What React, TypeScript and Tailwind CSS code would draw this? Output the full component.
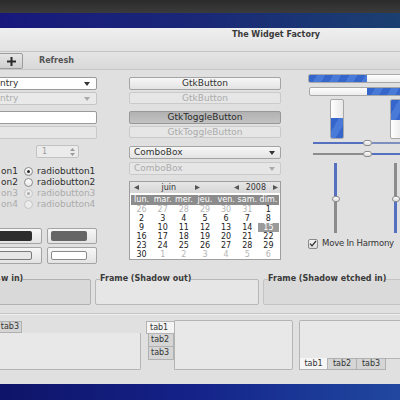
import React from 'react';

const DownArrow = ({ color = '#333' }: { color?: string }) => (
  <svg width="6" height="4" viewBox="0 0 6 4" className="shrink-0">
    <path d="M0 0h6L3 4z" fill={color} />
  </svg>
);

const SideArrow = ({ dir }: { dir: 'l' | 'r' }) => (
  <svg width="5" height="5" viewBox="0 0 5 5" className="shrink-0">
    <path d={dir === 'l' ? 'M5 0v5L0 2.5z' : 'M0 0v5l5-2.5z'} fill="#555" />
  </svg>
);

const btn =
  'flex items-center justify-center rounded-[2px] border border-[#a4a4a4] bg-gradient-to-b from-[#f7f7f7] to-[#e3e3e3]';
const btnOff =
  'flex items-center justify-center rounded-[2px] border border-[#cacaca] bg-[#e6e6e6] text-[#ababab]';

const calendar = [
  [26, 27, 28, 29, 30, 31, 1],
  [2, 3, 4, 5, 6, 7, 8],
  [9, 10, 11, 12, 13, 14, 15],
  [16, 17, 18, 19, 20, 21, 22],
  [23, 24, 25, 26, 27, 28, 29],
  [30, 1, 2, 3, 4, 5, 6],
];

const blueFill =
  'bg-[repeating-linear-gradient(120deg,#3566cc_0px,#3566cc_7px,#4a7ad8_7px,#4a7ad8_14px)]';

function App() {
  return (
    <div className="w-[400px] h-[400px] overflow-hidden flex flex-col font-['DejaVu_Sans',sans-serif] text-[9px] leading-none text-[#333]">
      {/* ── Desktop panel + wallpaper ─────────────────────────── */}
      <div className="h-[13px] shrink-0 bg-gradient-to-b from-[#2b2b2b] to-[#3b3b3b]" />
      <div className="h-[15px] shrink-0 bg-gradient-to-r from-[#18187c] via-[#1a2877] to-[#1b3f70]" />

      {/* ── Window ───────────────────────────────────────────── */}
      <div className="h-[356px] shrink-0 bg-[#e0e0e0] flex flex-col">
        {/* title bar */}
        <div className="h-[24px] shrink-0 border-b border-[#c4c4c4] bg-gradient-to-b from-[#efefef] to-[#e2e2e2] pt-[1px] pl-[232px]">
          <span className="text-[8px] leading-[11px] font-bold text-[#3a3a3a] whitespace-nowrap">The Widget Factory</span>
        </div>

        {/* toolbar */}
        <div className="h-[18px] shrink-0 border-b border-[#c6c6c6] bg-gradient-to-b from-[#e4e4e4] to-[#d9d9d9] flex items-start">
          <div className="mt-[1px] -ml-[5px] w-[28px] h-[16px] rounded-[2px] border border-[#9c9c9c] bg-gradient-to-b from-[#e6e6e6] to-[#cfcfcf] flex items-center justify-center pl-[5px]">
            <svg width="9" height="9" viewBox="0 0 9 9">
              <path d="M3.5 0h2v3.5H9v2H5.5V9h-2V5.5H0v-2h3.5z" fill="#2a2a2a" />
            </svg>
          </div>
          <span className="ml-[16px] mt-[5px] text-[8px] font-bold text-[#555]">Refresh</span>
        </div>

        {/* widgets */}
        <div className="flex items-start pt-[4px]">
          {/* left column */}
          <div className="-ml-[40px] w-[137px] shrink-0 mt-[3px] flex flex-col">
            <div className="h-[13px] rounded-[2px] border border-[#9a9a9a] bg-white flex items-center pl-[39px] pr-[6px]">
              <span className="flex-1">ntry</span>
              <DownArrow />
            </div>
            <div className="mt-[2px] h-[13px] rounded-[2px] border border-[#c6c6c6] bg-[#e9e9e9] text-[#ababab] flex items-center pl-[39px] pr-[6px]">
              <span className="flex-1">ntry</span>
              <DownArrow color="#aaa" />
            </div>
            <div className="mt-[6px] h-[13px] rounded-[2px] border border-[#9a9a9a] bg-white" />
            <div className="mt-[2px] h-[13px] rounded-[2px] border border-[#c8c8c8] bg-[#e6e6e6]" />
            <div className="mt-[6px] ml-[76px] w-[43px] h-[13px] rounded-[2px] border border-[#c2c2c2] bg-[#ebebeb] flex items-center pl-[5px] pr-[3px] text-[8px] text-[#9a9a9a]">
              <span className="flex-1">1</span>
              <svg width="5" height="8" viewBox="0 0 5 8">
                <path d="M0 3h5L2.5 0z M0 5h5L2.5 8z" fill="#9a9a9a" />
              </svg>
            </div>

            <div className="mt-[8px] flex flex-col">
              {[1, 2, 3, 4].map((n) => {
                const off = n > 2;
                const on = n === 1 || n === 3;
                return (
                  <div key={n} className={`h-[11px] flex items-center ${off ? 'text-[#ababab]' : 'text-[#2e2e2e]'}`}>
                    <div className="w-[58px] flex justify-end whitespace-nowrap">{`on${n}`}</div>
                    <div
                      className={`ml-[6px] w-[9px] h-[9px] rounded-full border flex items-center justify-center ${
                        off ? 'border-[#c4c4c4] bg-[#ececec]' : 'border-[#8a8a8a] bg-gradient-to-b from-white to-[#e6e6e6]'
                      }`}
                    >
                      {on && <div className={`w-[3px] h-[3px] rounded-full ${off ? 'bg-[#aaa]' : 'bg-[#2a2a2a]'}`} />}
                    </div>
                    <span className="ml-[4px] whitespace-nowrap">{`radiobutton${n}`}</span>
                  </div>
                );
              })}
            </div>

            <div className="mt-[18px] ml-[32px] flex gap-[5px]">
              {['bg-[#2d2d2d]', 'bg-[#666666]'].map((c) => (
                <div key={c} className={`w-[50px] h-[16px] ${btn} pl-[3px] pr-[9px] py-[2px]`}>
                  <div className={`w-full h-full rounded-[2px] ${c}`} />
                </div>
              ))}
            </div>
            <div className="mt-[3px] ml-[32px] flex gap-[5px]">
              {['bg-[#e6e6e6] border-[#7a7a7a]', 'bg-white border-[#8a8a8a]'].map((c) => (
                <div key={c} className={`w-[50px] h-[17px] ${btn} pl-[3px] pr-[9px] py-[3px]`}>
                  <div className={`w-full h-full rounded-[2px] border ${c}`} />
                </div>
              ))}
            </div>
          </div>

          {/* middle column */}
          <div className="ml-[32px] w-[152px] shrink-0 mt-[3px] flex flex-col">
            <div className={`h-[13px] ${btn}`}>GtkButton</div>
            <div className={`mt-[2px] h-[12px] ${btnOff}`}>GtkButton</div>
            <div className="mt-[7px] h-[13px] rounded-[2px] border border-[#989898] bg-gradient-to-b from-[#b2b2b2] to-[#c2c2c2] flex items-center justify-center text-[#2a2a2a]">
              GtkToggleButton
            </div>
            <div className={`mt-[2px] h-[12px] ${btnOff}`}>GtkToggleButton</div>
            <div className={`mt-[8px] h-[13px] ${btn} !justify-start pl-[4px] pr-[5px]`}>
              <span className="flex-1">ComboBox</span>
              <DownArrow />
            </div>
            <div className={`mt-[3px] h-[13px] ${btnOff} !justify-start pl-[4px] pr-[5px]`}>
              <span className="flex-1">ComboBox</span>
              <DownArrow color="#aaa" />
            </div>

            {/* calendar */}
            <div className="mt-[6px] border border-[#9e9e9e] bg-white flex flex-col text-[8px]">
              <div className="h-[11px] bg-gradient-to-b from-[#e6e6e6] to-[#d6d6d6] flex items-center pl-[4px] pr-[2px] text-[#333]">
                <SideArrow dir="l" />
                <span className="ml-[20px] w-[20px] text-center">juin</span>
                <span className="ml-[16px]"><SideArrow dir="r" /></span>
                <span className="ml-[34px]"><SideArrow dir="l" /></span>
                <span className="ml-[7px]">2008</span>
                <span className="ml-[7px]"><SideArrow dir="r" /></span>
              </div>
              <div className="mx-[1px] mt-[2px] h-[10px] bg-[#8c8c8c] grid grid-cols-7 items-center text-white">
                {['lun.', 'mar.', 'mer.', 'jeu.', 'ven.', 'sam.', 'dim.'].map((d) => (
                  <span key={d} className="text-center">{d}</span>
                ))}
              </div>
              <div className="px-[1px] flex flex-col">
                {calendar.map((row, r) => (
                  <div key={r} className="h-[9px] grid grid-cols-7 items-center">
                    {row.map((d, i) => {
                      const other = (r === 0 && i < 6) || (r === 5 && i > 0);
                      const sel = r === 2 && i === 6;
                      return (
                        <span
                          key={i}
                          className={`h-[9px] flex items-center justify-center ${
                            sel ? 'bg-[#9a9a9a] text-white' : other ? 'text-[#b4b4b4]' : 'text-[#222]'
                          }`}
                        >
                          {d}
                        </span>
                      );
                    })}
                  </div>
                ))}
              </div>
            </div>
          </div>

          {/* right column */}
          <div className="ml-[27px] w-[110px] shrink-0 flex flex-col">
            <div className="w-[100px] h-[9px] rounded-[2px] border border-[#a8a8a8] bg-gradient-to-b from-white to-[#ececec] flex overflow-hidden">
              <div className={`w-[58px] h-full ${blueFill}`} />
            </div>
            <div className="mt-[4px] ml-[1px] w-[100px] h-[9px] rounded-[2px] border border-[#a8a8a8] bg-gradient-to-b from-white to-[#ececec] flex overflow-hidden">
              <div className="flex-1" />
              <div className={`w-[41px] h-full ${blueFill}`} />
            </div>
            <div className="mt-[3px] h-[40px] flex">
              <div className="ml-[22px] w-[14px] h-full rounded-[2px] border border-[#a8a8a8] bg-gradient-to-r from-white to-[#e8e8e8] flex flex-col overflow-hidden">
                <div className="flex-1" />
                <div className={`h-[20px] ${blueFill}`} />
              </div>
              <div className="ml-[46px] w-[14px] h-full rounded-[2px] border border-[#a8a8a8] bg-gradient-to-r from-white to-[#e8e8e8] flex flex-col overflow-hidden">
                <div className={`h-[20px] ${blueFill}`} />
              </div>
            </div>

            {/* horizontal scales */}
            <div className="h-[8px] ml-[5px] flex items-center">
              <div className="w-[50px] h-[2px] bg-[#5670c0]" />
              <div className="w-[9px] h-[6px] rounded-full border border-[#8c8c8c] bg-gradient-to-b from-white to-[#dcdcdc]" />
              <div className="flex-1 h-[2px] bg-[#7d8fbf]" />
            </div>
            <div className="mt-[3px] h-[8px] ml-[5px] flex items-center">
              <div className="w-[50px] h-[2px] bg-[#8c8c8c]" />
              <div className="w-[9px] h-[6px] rounded-full border border-[#8c8c8c] bg-gradient-to-b from-white to-[#dcdcdc]" />
              <div className="flex-1 h-[2px] bg-[#5670c0]" />
            </div>

            {/* vertical scales */}
            <div className="mt-[5px] h-[70px] flex">
              <div className="ml-[23px] w-[9px] flex flex-col items-center">
                <div className="w-[3px] h-[33px] bg-[#5670c0]" />
                <div className="w-[8px] h-[6px] rounded-full border border-[#8c8c8c] bg-gradient-to-b from-white to-[#dcdcdc]" />
                <div className="w-[3px] flex-1 bg-[#8c8c8c]" />
              </div>
              <div className="ml-[51px] w-[9px] flex flex-col items-center">
                <div className="w-[3px] h-[33px] bg-[#8c8c8c]" />
                <div className="w-[8px] h-[6px] rounded-full border border-[#8c8c8c] bg-gradient-to-b from-white to-[#dcdcdc]" />
                <div className="w-[3px] flex-1 bg-[#5670c0]" />
              </div>
            </div>

            <div className="mt-[5px] h-[11px] flex items-center">
              <div className="w-[10px] h-[10px] rounded-[2px] border border-[#8a8a8a] bg-gradient-to-b from-[#f4f4f4] to-[#dcdcdc] flex items-center justify-center">
                <svg width="8" height="7" viewBox="0 0 8 7">
                  <path d="M1 3.6l2 2.2L7 1" stroke="#333" strokeWidth="1.3" fill="none" />
                </svg>
              </div>
              <span className="ml-[4px] text-[8.5px] tracking-[-0.2px] whitespace-nowrap">Move In Harmony</span>
            </div>
          </div>
        </div>

        {/* frames */}
        <div className="mt-[10px] -ml-[66px] flex items-start">
          {[
            { w: 'w-[157px] pl-[66px]', label: 'w in)', box: 'bg-[#d9d9d9] border-[#b2b2b2]' },
            { w: 'w-[164px] ml-[4px] pl-[4px]', label: 'Frame (Shadow out)', box: 'bg-[#e6e6e6] border-[#b8b8b8]' },
            { w: 'w-[150px] ml-[4px] pl-[4px]', label: 'Frame (Shadow etched in)', box: 'bg-[#dadada] border-[#c4c4c4]' },
          ].map((f) => (
            <fieldset key={f.label} className={`${f.w} shrink-0 h-[31px] rounded-[2px] border ${f.box}`}>
              <legend className="text-[8px] leading-[10px] font-bold text-[#3a3a3a] whitespace-nowrap">{f.label}</legend>
            </fieldset>
          ))}
        </div>

        {/* separator */}
        <div className="mt-[8px] h-[2px] border-t border-[#c6c6c6] border-b border-b-[#efefef]" />

        {/* notebooks */}
        <div className="mt-[5px] flex items-start text-[8px]">
          {/* tabs on top */}
          <div className="-ml-[62px] w-[203px] shrink-0 flex flex-col">
            <div className="mt-[1px] flex">
              <div className="w-[28px] h-[12px] border border-b-0 border-[#b4b4b4] bg-[#f4f4f4]" />
              <div className="w-[28px] h-[12px] border border-l-0 border-[#b0b0b0] bg-[#d5d5d5]" />
              <div className="w-[28px] h-[12px] border border-l-0 border-[#b0b0b0] bg-[#d5d5d5] flex items-center justify-end pr-[2px]">
                tab3
              </div>
            </div>
            <div className="h-[37px] rounded-b-[2px] border border-t-0 border-[#b4b4b4] bg-[#e8e8e8]" />
          </div>

          {/* tabs on left */}
          <div className="ml-[5px] flex shrink-0">
            <div className="mt-[1px] w-[28px] flex flex-col items-end">
              <div className="w-[28px] h-[13px] border border-r-0 border-[#b4b4b4] bg-[#f4f4f4] flex items-center pl-[3px]">tab1</div>
              {['tab2', 'tab3'].map((t) => (
                <div key={t} className="w-[26px] h-[13px] border border-t-0 border-[#b0b0b0] bg-[#d5d5d5] flex items-center pl-[2px]">
                  {t}
                </div>
              ))}
            </div>
            <div className="w-[119px] h-[50px] rounded-r-[2px] border border-[#b4b4b4] bg-[#e8e8e8]" />
          </div>

          {/* tabs on bottom */}
          <div className="ml-[6px] w-[110px] shrink-0 flex flex-col">
            <div className="h-[38px] rounded-t-[2px] border border-b-0 border-[#b4b4b4] bg-[#e8e8e8]" />
            <div className="flex">
              <div className="w-[29px] h-[12px] border border-t-0 border-[#b4b4b4] bg-[#f6f6f6] flex items-center justify-center">tab1</div>
              {['tab2', 'tab3'].map((t) => (
                <div key={t} className="w-[29px] h-[12px] border border-l-0 border-[#b0b0b0] bg-[#d5d5d5] flex items-center justify-center">
                  {t}
                </div>
              ))}
              <div className="flex-1 border-t border-[#b4b4b4]" />
            </div>
          </div>
        </div>
      </div>

      <div className="flex-1 bg-gradient-to-r from-[#0e1468] via-[#15238a] to-[#2148a0]" />
    </div>
  );
}

export default App;
